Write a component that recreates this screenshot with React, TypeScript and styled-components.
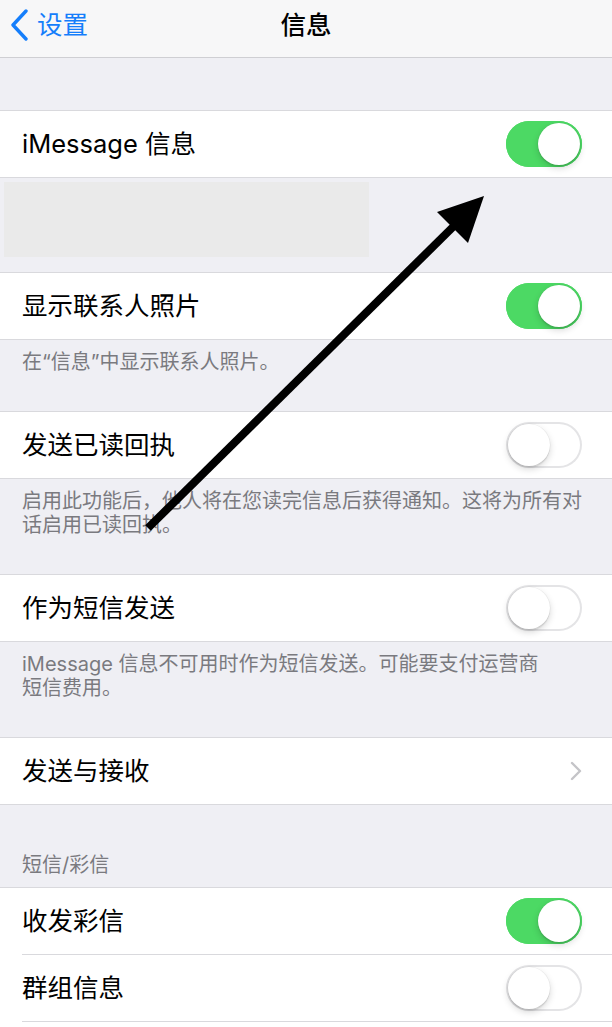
import React from "react";
import styled, { createGlobalStyle } from "styled-components";

const GlobalStyle = createGlobalStyle`
  html, body { margin: 0; padding: 0; background: #efeff4; }
  body {
    font-family: Inter, "Noto Sans CJK SC", "Noto Sans", sans-serif;
    -webkit-font-smoothing: antialiased;
  }
  * { box-sizing: border-box; }
`;

const Page = styled.div`
  position: relative;
  width: 612px;
  height: 1027px;
  overflow: hidden;
  background: #efeff4;
  display: flex;
  flex-direction: column;
`;

const NavBar = styled.header`
  height: 58px;
  flex-shrink: 0;
  background: #f7f7f8;
  border-bottom: 1px solid #cfcfd3;
  display: grid;
  grid-template-columns: 1fr auto 1fr;
  align-items: center;
  padding-bottom: 8px;
`;

const BackButton = styled.div`
  display: flex;
  align-items: center;
  gap: 7px;
  padding-left: 10px;
  color: #157efb;
  font-size: 25.5px;
  line-height: 30px;
`;

const Title = styled.div`
  font-size: 25.5px;
  font-weight: 500;
  line-height: 30px;
  color: #000;
`;

const Gap = styled.div<{ $h: number }>`
  height: ${(p) => p.$h}px;
  flex-shrink: 0;
`;

const HiddenArea = styled.div`
  height: 94px;
  flex-shrink: 0;
  padding: 4px 0 0 4px;
`;

const Placeholder = styled.div`
  width: 365px;
  height: 75px;
  background: #eaeaea;
`;

const Group = styled.section`
  flex-shrink: 0;
  background: #fff;
  border-top: 1px solid #d9d9dd;
  border-bottom: 1px solid #d9d9dd;
`;

const Row = styled.div`
  height: 66px;
  display: flex;
  align-items: center;
  justify-content: space-between;
  padding: 0 30px 0 22px;
`;

const Separator = styled.div`
  height: 1px;
  margin-left: 22px;
  background: #d9d9dd;
`;

const Label = styled.span`
  font-size: 25.5px;
  line-height: 30px;
  color: #000;
`;

const Track = styled.span<{ $on: boolean }>`
  position: relative;
  display: block;
  width: 76px;
  height: 46px;
  border-radius: 23px;
  background: ${(p) => (p.$on ? "#4cd964" : "#fff")};
  box-shadow: inset 0 0 0 2px ${(p) => (p.$on ? "#4cd964" : "#e4e4e6")};
`;

const Knob = styled.span<{ $on: boolean }>`
  position: absolute;
  top: 2px;
  left: ${(p) => (p.$on ? "32px" : "2px")};
  width: 42px;
  height: 42px;
  border-radius: 50%;
  background: #fff;
  box-shadow: 0 3px 7px rgba(0, 0, 0, 0.16), 0 2px 1px rgba(0, 0, 0, 0.08),
    0 0 0 0.5px rgba(0, 0, 0, 0.06);
`;

const Footer = styled.div`
  flex-shrink: 0;
  padding: 10px 20px 36px 22px;
  font-size: 20px;
  line-height: 24.5px;
  color: #7a7a7f;
`;

const SectionHeader = styled.div`
  flex-shrink: 0;
  height: 82px;
  padding: 48px 22px 0 22px;
  font-size: 20px;
  line-height: 25px;
  color: #7a7a7f;
`;

const ArrowLayer = styled.svg`
  position: absolute;
  left: 0;
  top: 0;
  width: 612px;
  height: 1027px;
  pointer-events: none;
`;

const Toggle = ({ on }: { on: boolean }) => (
  <Track $on={on}>
    <Knob $on={on} />
  </Track>
);

const BackChevron = () => (
  <svg width="20" height="32" viewBox="0 0 20 32" fill="none">
    <path d="M16 2 L3 16 L16 30" stroke="#157efb" strokeWidth="3.4" strokeLinecap="round" strokeLinejoin="round" />
  </svg>
);

const Chevron = () => (
  <svg width="12" height="20" viewBox="0 0 12 20" fill="none">
    <path d="M2 2 L10 10 L2 18" stroke="#c4c4c8" strokeWidth="2.4" strokeLinecap="round" strokeLinejoin="round" />
  </svg>
);

export default function App() {
  return (
    <>
      <GlobalStyle />
      <Page>
        <NavBar>
          <BackButton>
            <BackChevron />
            <span>设置</span>
          </BackButton>
          <Title>信息</Title>
          <div />
        </NavBar>
        <Gap $h={52} />
        <Group>
          <Row>
            <Label>iMessage 信息</Label>
            <Toggle on />
          </Row>
        </Group>
        <HiddenArea>
          <Placeholder />
        </HiddenArea>
        <Group>
          <Row>
            <Label>显示联系人照片</Label>
            <Toggle on />
          </Row>
        </Group>
        <Footer>在“信息”中显示联系人照片。</Footer>
        <Group>
          <Row>
            <Label>发送已读回执</Label>
            <Toggle on={false} />
          </Row>
        </Group>
        <Footer>
          启用此功能后，他人将在您读完信息后获得通知。这将为所有对
          <br />
          话启用已读回执。
        </Footer>
        <Group>
          <Row>
            <Label>作为短信发送</Label>
            <Toggle on={false} />
          </Row>
        </Group>
        <Footer>
          iMessage 信息不可用时作为短信发送。可能要支付运营商
          <br />
          短信费用。
        </Footer>
        <Group>
          <Row>
            <Label>发送与接收</Label>
            <Chevron />
          </Row>
        </Group>
        <SectionHeader>短信/彩信</SectionHeader>
        <Group>
          <Row>
            <Label>收发彩信</Label>
            <Toggle on />
          </Row>
          <Separator />
          <Row>
            <Label>群组信息</Label>
            <Toggle on={false} />
          </Row>
          <Separator />
          <Row />
        </Group>
        <ArrowLayer viewBox="0 0 612 1027">
          <line x1="148" y1="528" x2="458" y2="222" stroke="#000" strokeWidth="8" />
          <polygon points="484,196 437,212 468,243" fill="#000" />
        </ArrowLayer>
      </Page>
    </>
  );
}
